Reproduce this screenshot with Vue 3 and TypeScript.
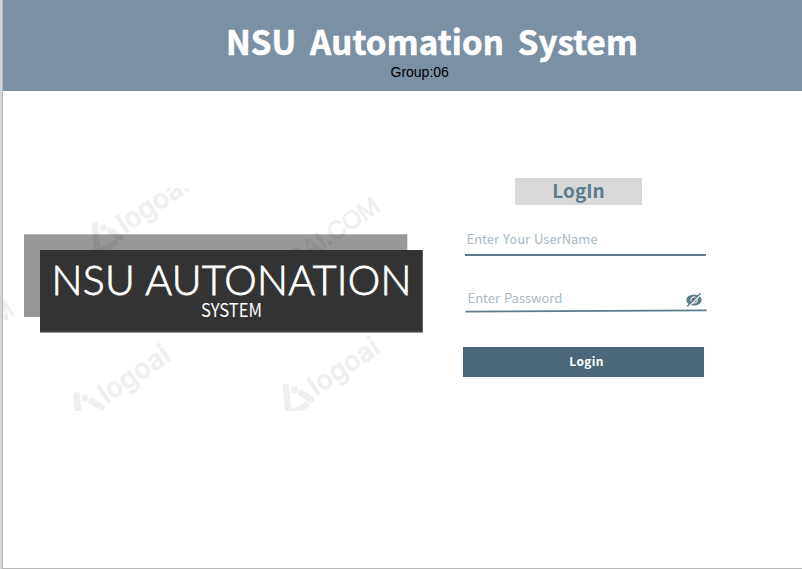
<script setup lang="ts">
import { ref } from 'vue'

const username = ref('')
const password = ref('')
const visible = ref(false)

const marks = [
  { x: 127, y: 232 },
  { x: 108.5, y: 402 },
  { x: 318, y: 394 },
]
</script>

<template>
  <div class="page">
    <header class="banner">
      <h1 class="title">NSU Automation System</h1>
      <p class="group">Group:06</p>
    </header>
    <main class="content">
      <svg class="logo" viewBox="3 188 422 223" width="422" height="223" role="img" aria-label="NSU Autonation System">
        <rect x="24" y="234.3" width="383.3" height="82.7" fill="#989898" />
        <g class="watermark">
          <g v-for="(m, i) in marks" :key="i" :transform="`translate(${m.x} ${m.y}) rotate(-34)`">
            <text class="brand" x="-3" y="1" textLength="80" lengthAdjust="spacingAndGlyphs">logoai</text>
            <g transform="rotate(34)">
              <path d="M-32 -7L-29.5 18" stroke-width="6.5" />
              <path d="M-17 -1L-6.5 5.5M-25 18L-12 11" stroke-width="6.5" />
              <circle cx="-23.7" cy="-4" r="3.4" />
            </g>
          </g>
          <text class="domain" transform="translate(381.5 210) rotate(-34)" text-anchor="end" textLength="158">LOGOAI.COM</text>
          <text class="domain" transform="translate(16 314) rotate(-34)" text-anchor="end">M</text>
        </g>
        <rect x="24" y="250" width="16" height="67" fill="#989898" />
        <rect x="40" y="250" width="383" height="82.8" fill="#777" />
        <rect x="40" y="250" width="382.3" height="81.8" fill="#333" />
        <text class="logo-name" x="51.5" y="295" textLength="360">NSU AUTONATION</text>
        <text class="logo-sub" x="201" y="317" textLength="61" lengthAdjust="spacingAndGlyphs">SYSTEM</text>
      </svg>
      <form class="login" @submit.prevent>
        <h2 class="heading">LogIn</h2>
        <label class="field">
          <input v-model="username" type="text" placeholder="Enter Your UserName" />
        </label>
        <label class="field secret">
          <input v-model="password" :type="visible ? 'text' : 'password'" placeholder="Enter Password" />
          <svg class="eye" width="18" height="16" viewBox="0 0 18 16" @click.prevent="visible = !visible">
            <ellipse cx="9" cy="8" rx="7.7" ry="5.6" fill="#5b7c8d" />
            <circle cx="9" cy="8" r="3.2" fill="none" stroke="#fff" stroke-width="1" />
            <path d="M3.2 15.1L16 2.3" stroke="#fff" stroke-width="1.4" />
            <path d="M2.2 14.5L15.5 1.2" stroke="#5b7c8d" stroke-width="1.4" />
          </svg>
          <svg class="rule" width="242" height="4" viewBox="0 0 242 4">
            <path d="M0.5 2.6L241.5 1.3" stroke="#5b7c8d" stroke-width="1.8" />
          </svg>
        </label>
        <button class="submit" type="submit">Login</button>
      </form>
    </main>
  </div>
</template>

<style>
body {
  background: #fff;
}
</style>

<style scoped>
.page {
  box-sizing: border-box;
  width: 802px;
  height: 569px;
  padding-left: 1px;
  border-left: 2px solid #d6d6d6;
  box-shadow: inset 1px -1px #b9b9b9;
  overflow: hidden;
}
.banner {
  box-sizing: border-box;
  height: 91px;
  padding-top: 21px;
  background: #7b90a3;
}
.title {
  margin: 0 0 0 223px;
  font: 700 33px/40px "Noto Sans CJK SC", sans-serif;
  letter-spacing: 0.15px;
  word-spacing: 6px;
  color: #fff;
  white-space: nowrap;
  -webkit-text-stroke: 0.6px #fff;
}
.group {
  margin: 3px 0 0 387.5px;
  font: 14px/16px "Liberation Sans", Arial, sans-serif;
  color: #000;
}
.content {
  display: flex;
  align-items: flex-start;
}
.logo {
  flex: none;
  margin-top: 97px;
}
.watermark {
  fill: #000;
  opacity: 0.065;
}
.watermark path {
  stroke: #000;
  stroke-linecap: round;
}
.brand {
  font: 600 28px Inter, sans-serif;
  stroke: #000;
  stroke-width: 0.6px;
  stroke-linejoin: round;
}
.domain {
  font: 400 25px "Liberation Sans", sans-serif;
  stroke: #000;
  stroke-width: 0.9px;
}
.logo-name {
  fill: #fff;
  stroke: #fff;
  stroke-width: 0.8px;
  font: 300 41px Lato, sans-serif;
}
.logo-sub {
  fill: #fff;
  font: 400 18px "Noto Sans CJK SC", sans-serif;
}
.login {
  display: flex;
  flex-direction: column;
  width: 243px;
  margin: 87px 0 0 38px;
}
.heading {
  width: 127px;
  height: 27px;
  margin: 0 0 0 52px;
  background: #d9d9d9;
  color: #5b7c8d;
  font: 700 19px/24px "Noto Sans CJK SC", sans-serif;
  text-align: center;
}
.field {
  display: flex;
  align-items: center;
  box-sizing: border-box;
  width: 241px;
  height: 33px;
  margin: 18px 0 0 2px;
  border-bottom: 2px solid #5b7c8d;
}
.field input {
  flex: 1;
  min-width: 0;
  height: 28px;
  padding: 0 0 0 1.5px;
  border: 0;
  outline: 0;
  background: none;
  color: #4b6779;
  font: 13px/20px "Noto Sans CJK SC", sans-serif;
  word-spacing: 1px;
}
.field input::placeholder {
  color: #a9bac4;
  opacity: 1;
}
.secret {
  flex-wrap: wrap;
  align-content: flex-start;
  height: 32px;
  margin-top: 28px;
  border: 0;
}
.secret input {
  height: 27px;
  padding-left: 2.5px;
}
.eye {
  margin: 4px 3px 0 0;
  cursor: pointer;
}
.rule {
  flex: none;
  width: 242px;
  margin-top: -2px;
  margin-right: -1px;
}
.submit {
  width: 241px;
  height: 30px;
  margin-top: 31px;
  padding: 0 0 2px 6px;
  border: 0;
  background: #4b6779;
  color: #fff;
  font: 700 12px/20px "Noto Sans CJK SC", sans-serif;
  letter-spacing: 0.3px;
}
</style>
